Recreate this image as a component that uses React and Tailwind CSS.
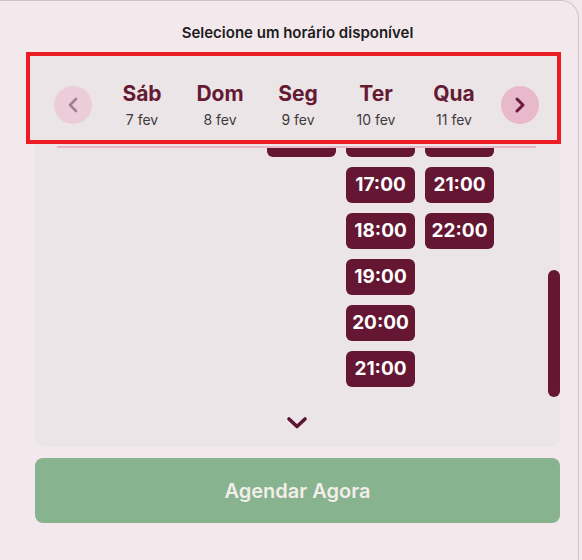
import React from "react";

const days = [
  { name: "Sáb", date: "7 fev", slots: [] },
  { name: "Dom", date: "8 fev", slots: [] },
  { name: "Seg", date: "9 fev", slots: [""] },
  { name: "Ter", date: "10 fev", slots: ["", "17:00", "18:00", "19:00", "20:00", "21:00"] },
  { name: "Qua", date: "11 fev", slots: ["", "21:00", "22:00"] },
];

export default function App() {
  return (
    <div className="w-[582px] h-[560px] bg-[#f3e9ed] font-['Inter',sans-serif] overflow-hidden">
      <div className="w-[579px] h-[560px] border-t border-r border-[#cdc6c9] rounded-tr-[18px] flex flex-col">
        <h2 className="mt-[22px] ml-[35px] w-[525px] text-center text-[15px] leading-[20px] font-semibold text-[#1c1c1c]">
          Selecione um horário disponível
        </h2>

        <div className="mt-[9px] ml-[26px] w-[535px] h-[92px] border-4 border-[#ec1c24] bg-[#ece5e8] relative z-10 flex items-center pt-[14px] pl-[24px]">
          <button className="w-[38px] h-[38px] rounded-full bg-[#ebcdd9] flex items-center justify-center">
            <svg width="12" height="18" viewBox="0 0 12 18" fill="none">
              <polyline points="9,3 3,9 9,15" stroke="#a57c8c" strokeWidth="2.6" strokeLinecap="round" strokeLinejoin="round" />
            </svg>
          </button>
          <div className="ml-[11px] flex">
            {days.map((d) => (
              <div key={d.name} className="w-[78px] flex flex-col items-center">
                <span className="text-[21px] leading-[24px] font-bold text-[#651a34]">{d.name}</span>
                <span className="mt-[5px] text-[14px] leading-[18px] text-[#3d3a3b]">{d.date}</span>
              </div>
            ))}
          </div>
          <button className="ml-[8px] w-[38px] h-[38px] rounded-full bg-[#e7b9ca] flex items-center justify-center">
            <svg width="12" height="18" viewBox="0 0 12 18" fill="none">
              <polyline points="3,3 9,9 3,15" stroke="#6b1a37" strokeWidth="3" strokeLinecap="round" strokeLinejoin="round" />
            </svg>
          </button>
        </div>

        <div className="ml-[35px] w-[525px] h-[303px] bg-[#ebe5e8] rounded-b-[10px] relative flex flex-col">
          <div className="mt-[2px] ml-[22px] w-[479px] h-[2px] bg-[#e8b6c8]" />
          <div className="h-[253px] overflow-hidden">
            <div className="-mt-[27px] pl-[74px] grid grid-cols-[repeat(5,69px)] gap-x-[10px]">
              {days.map((d) => (
                <div key={d.name} className="flex flex-col gap-[10px]">
                  {d.slots.map((s, i) => (
                    <div
                      key={i}
                      className="h-[36px] rounded-[6px] bg-[#641632] text-white text-[19px] font-bold flex items-center justify-center"
                    >
                      {s}
                    </div>
                  ))}
                </div>
              ))}
            </div>
          </div>
          <div className="flex justify-center mt-[15px]">
            <svg width="24" height="14" viewBox="0 0 24 14" fill="none" className="ml-[-1px]">
              <polyline points="4,3 12,10.5 20,3" stroke="#5c1531" strokeWidth="3.6" strokeLinecap="round" strokeLinejoin="round" />
            </svg>
          </div>
          <div className="absolute left-[513px] top-[126px] w-[12px] h-[127px] rounded-full bg-[#641632]" />
        </div>

        <button className="mt-[11px] ml-[35px] w-[525px] h-[65px] rounded-[8px] bg-[#87b38f] text-[#f3eeea] text-[20px] font-semibold">
          Agendar Agora
        </button>
      </div>
    </div>
  );
}
